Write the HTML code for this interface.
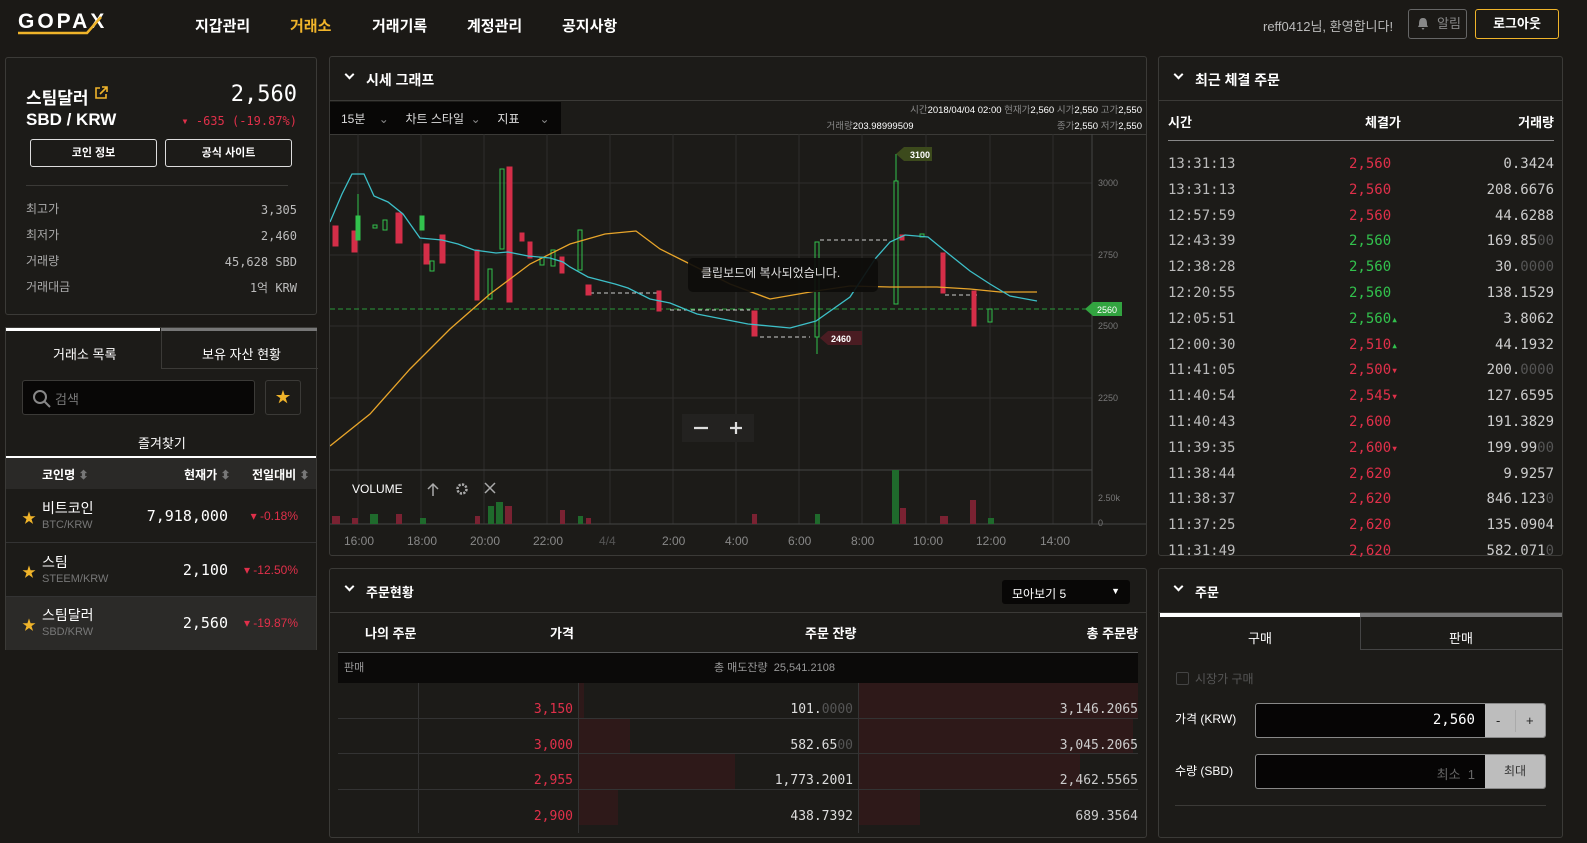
<!DOCTYPE html>
<html><head><meta charset="utf-8"><style>
*{box-sizing:border-box;margin:0;padding:0}
body{width:1587px;height:824px;overflow:hidden;background:#1b1916;color:#e8e8e8;font-family:"Liberation Sans","Noto Sans CJK KR",sans-serif;font-size:13px;position:relative}
.a{position:absolute}
.p{position:absolute;background:#1c1b18;border:1px solid #3b3a37;border-radius:3px}
.m{font-family:"DejaVu Sans Mono","Liberation Mono",monospace}
.r{color:#e0304a}.g{color:#32c24d}.dim{color:#555}
.btn{position:absolute;border:1px solid #ddd;border-radius:3px;font-size:11px;font-weight:bold;text-align:center;line-height:26px;color:#fff}
.nav{position:absolute;top:15px;font-size:15px;font-weight:bold;color:#fff}
.ph{position:absolute;left:0;right:0;top:0;height:44px;border-bottom:1px solid #3b3a37}
.ph b{position:absolute;left:36px;top:13px;font-size:14px;color:#fff}
.ph i{position:absolute;left:16px;top:14px;width:7px;height:7px;border-right:2px solid #fff;border-bottom:2px solid #fff;transform:rotate(45deg)}
.cr{position:absolute;left:0;right:0;height:53px}
.cr .st{position:absolute;left:16px;top:18px;color:#f0b42a;font-size:14px}
.cr .nm{position:absolute;left:36px;top:8px;color:#fff;font-size:14px}
.cr .sb{position:absolute;left:36px;top:29px;color:#777;font-size:11px}
.cr .pr{position:absolute;right:88px;top:17px;color:#fff;font-size:15px}
.cr .ch{position:absolute;right:18px;top:19px;font-size:12px}
</style></head><body>

<!-- header -->
<div class="a" style="left:18px;top:10px;font-size:21px;font-weight:bold;letter-spacing:3px;color:#fff">GOPAX</div>
<svg class="a" style="left:17px;top:14px" width="88" height="22"><path d="M1 19 H70 L84 3" stroke="#f0b42a" stroke-width="2.5" fill="none"/></svg>
<div class="nav" style="left:195px">지갑관리</div>
<div class="nav" style="left:290px;color:#f0b42a">거래소</div>
<div class="nav" style="left:372px">거래기록</div>
<div class="nav" style="left:467px">계정관리</div>
<div class="nav" style="left:562px">공지사항</div>
<div class="a" style="left:1263px;top:16px;font-size:13px;color:#bbb">reff0412님, 환영합니다!</div>
<div class="a" style="left:1408px;top:9px;width:59px;height:30px;border:1px solid #666;border-radius:3px;color:#888;font-size:13px;line-height:28px;padding-left:28px">알림</div>
<svg class="a" style="left:1417px;top:17px" width="12" height="13"><path d="M6 1 C2 1 2 5 2 8 L1 10 H11 L10 8 C10 5 10 1 6 1Z M4.5 11 H7.5 L6 13Z" fill="#888"/></svg>
<div class="a" style="left:1475px;top:9px;width:84px;height:30px;border:1px solid #f0b42a;border-radius:3px;color:#fff;font-size:13px;font-weight:bold;line-height:28px;text-align:center">로그아웃</div>

<!-- left info -->
<div class="p" style="left:5px;top:57px;width:312px;height:258px">
 <div class="a" style="left:20px;top:26px;font-size:17px;font-weight:bold;color:#fff">스팀달러</div>
 <svg class="a" style="left:88px;top:28px" width="14" height="14"><path d="M6 2H2V12H12V8M8 1H13V6M13 1L6 8" stroke="#f0b42a" stroke-width="1.6" fill="none"/></svg>
 <div class="a" style="left:20px;top:52px;font-size:17px;font-weight:bold;color:#fff">SBD / KRW</div>
 <div class="a m" style="right:19px;top:24px;font-size:22px;color:#fff">2,560</div>
 <div class="a m r" style="right:19px;top:56px;font-size:12px">▾ -635 (-19.87%)</div>
 <div class="btn" style="left:24px;top:81px;width:127px;height:28px">코인 정보</div>
 <div class="btn" style="left:159px;top:81px;width:127px;height:28px">공식 사이트</div>
 <div class="a" style="left:20px;right:28px;top:127px;border-top:1px solid #3b3a37"></div>
 <div class="a" style="left:20px;top:138px;color:#aaa;font-size:12px;line-height:26px">최고가<br>최저가<br>거래량<br>거래대금</div>
 <div class="a m" style="right:19px;top:139px;color:#bbb;font-size:12px;line-height:26px;text-align:right">3,305<br>2,460<br>45,628 SBD<br>1억 KRW</div>
</div>

<!-- left list -->
<div class="p" style="left:5px;top:327px;width:312px;height:323px;border-radius:0">
 <div class="a" style="left:0;top:0;width:154px;height:3px;background:#fff"></div>
 <div class="a" style="left:155px;top:0;width:156px;height:3px;background:#777"></div>
 <div class="a" style="left:155px;top:3px;width:157px;height:38px;border-left:1px solid #3b3a37;border-bottom:1px solid #3b3a37"></div>
 <div class="a" style="left:47px;top:16px;font-size:13px;color:#fff">거래소 목록</div>
 <div class="a" style="left:196px;top:16px;font-size:13px;color:#fff">보유 자산 현황</div>
 <div class="a" style="left:16px;top:52px;width:233px;height:35px;background:#080706;border:1px solid #3b3a37;border-radius:3px"></div>
 <svg class="a" style="left:26px;top:61px" width="20" height="20"><circle cx="8" cy="8" r="6" stroke="#888" stroke-width="2" fill="none"/><path d="M12.5 12.5L18 18" stroke="#888" stroke-width="2"/></svg>
 <div class="a" style="left:49px;top:61px;color:#777;font-size:13px">검색</div>
 <div class="a" style="left:259px;top:52px;width:36px;height:35px;border:1px solid #3b3a37;border-radius:3px;color:#f0b42a;text-align:center;line-height:33px;font-size:15px">★</div>
 <div class="a" style="left:132px;top:105px;color:#fff;font-size:13px">즐겨찾기</div>
 <div class="a" style="left:0;right:0;top:128px;height:2px;background:#fff"></div>
 <div class="a" style="left:0;right:0;top:130px;height:31px;background:#2a2927"></div>
 <div class="a" style="left:36px;top:138px;font-size:12px;font-weight:bold;color:#fff">코인명 <span style="color:#777">⬍</span></div>
 <div class="a" style="left:178px;top:138px;font-size:12px;font-weight:bold;color:#fff">현재가 <span style="color:#777">⬍</span></div>
 <div class="a" style="left:246px;top:138px;font-size:12px;font-weight:bold;color:#fff">전일대비 <span style="color:#777">⬍</span></div>
 <div class="cr" style="top:162px;border-bottom:1px solid #333"><span class="st">★</span><span class="nm">비트코인</span><span class="sb">BTC/KRW</span><span class="pr m">7,918,000</span><span class="ch r">▾ -0.18%</span></div>
 <div class="cr" style="top:216px;border-bottom:1px solid #333"><span class="st">★</span><span class="nm">스팀</span><span class="sb">STEEM/KRW</span><span class="pr m">2,100</span><span class="ch r">▾ -12.50%</span></div>
 <div class="cr" style="top:269px;background:#2b2a28"><span class="st">★</span><span class="nm">스팀달러</span><span class="sb">SBD/KRW</span><span class="pr m">2,560</span><span class="ch r">▾ -19.87%</span></div>
</div>

<!-- chart panel -->
<div class="p" style="left:329px;top:56px;width:818px;height:500px">
 <div class="ph"><i></i><b>시세 그래프</b></div>
 <div class="a" style="left:0;top:45px;width:231px;height:32px;background:#080706"></div>
 <div class="a" style="left:11px;top:53px;font-size:12px;color:#ddd">15분 &nbsp;&nbsp;&nbsp;<span style="color:#888">⌄</span> &nbsp;&nbsp;&nbsp;&nbsp;차트 스타일 &nbsp;<span style="color:#888">⌄</span> &nbsp;&nbsp;&nbsp;&nbsp;지표 &nbsp;&nbsp;&nbsp;&nbsp;&nbsp;<span style="color:#888">⌄</span></div>
 <div class="a" style="right:4px;top:46px;font-size:9.5px;color:#888;text-align:right;line-height:16px">시간<span style="color:#fff">2018/04/04 02:00</span> 현재가<span style="color:#fff">2,560</span> 시가<span style="color:#fff">2,550</span> 고가<span style="color:#fff">2,550</span><br>거래량<span style="color:#fff">203.98999509</span> <span style="display:inline-block;width:138px"></span> 종가<span style="color:#fff">2,550</span> 저가<span style="color:#fff">2,550</span></div>
 <div class="a" style="left:0;right:0;top:77px;border-top:1px solid #3b3a37"></div>
</div>
<svg class="a" style="left:330px;top:134px" width="816" height="421">
 <g stroke="#2e2d2b" stroke-width="1">
  <path d="M28 0V390M91 0V390M154 0V390M217 0V390M280 0V390M343 0V390M406 0V390M469 0V390M532 0V390M596 0V390M660 0V390M723 0V390"/>
  <path d="M0 49H762M0 121H762M0 192H762M0 264H762"/>
 </g>
 <path d="M762 0V390" stroke="#444"/>
 <path d="M0 336H762M0 390H816" stroke="#444"/>
 <g fill="#777" font-size="9" font-family="Liberation Sans"><text x="768" y="52">3000</text><text x="768" y="124">2750</text><text x="768" y="195">2500</text><text x="768" y="267">2250</text><text x="768" y="367">2.50k</text><text x="768" y="392">0</text></g>
 <g fill="#888" font-size="12" font-family="Liberation Sans"><text x="14" y="411">16:00</text><text x="77" y="411">18:00</text><text x="140" y="411">20:00</text><text x="203" y="411">22:00</text><text x="269" y="411" fill="#555">4/4</text><text x="332" y="411">2:00</text><text x="395" y="411">4:00</text><text x="458" y="411">6:00</text><text x="521" y="411">8:00</text><text x="583" y="411">10:00</text><text x="646" y="411">12:00</text><text x="710" y="411">14:00</text></g>
 <path d="M0 175H762" stroke="#2a9a3a" stroke-dasharray="5,3"/>
 <g stroke="#ccc" stroke-dasharray="4,3" fill="none"><path d="M260 159H330M340 176H420M430 203H480M490 106H560M615 161H650"/></g>
 <g fill="#d42e48" stroke="#d42e48">
  <rect x="3" y="92" width="5" height="20"/><rect x="22" y="97" width="5" height="21"/><rect x="66" y="79" width="6" height="30"/><rect x="94" y="110" width="5" height="20"/><rect x="110" y="101" width="5" height="28"/>
  <rect x="145" y="116" width="4" height="50"/><rect x="177" y="33" width="5" height="135"/><rect x="190" y="99" width="4" height="8"/><rect x="198" y="108" width="4" height="16"/><rect x="230" y="123" width="4" height="16"/>
  <rect x="256" y="151" width="5" height="10"/><rect x="327" y="157" width="4" height="20"/><rect x="422" y="177" width="5" height="25"/><rect x="570" y="101" width="4" height="5"/><rect x="611" y="119" width="4" height="40"/><rect x="642" y="157" width="4" height="35"/>
 </g>
 <g fill="none" stroke="#32c24d">
  <rect x="26" y="82" width="4" height="24" fill="#32c24d"/><path d="M28 60V82"/><rect x="43" y="91" width="4" height="3"/><rect x="53" y="86" width="4" height="10"/><rect x="90" y="82" width="4" height="14" fill="#32c24d"/><rect x="100" y="127" width="4" height="10"/><rect x="158" y="135" width="4" height="30"/><rect x="170" y="35" width="4" height="80"/>
  <rect x="210" y="123" width="4" height="8"/><rect x="221" y="116" width="4" height="16"/><rect x="248" y="96" width="4" height="40"/><rect x="485" y="108" width="4" height="95"/><path d="M487 203V220"/><rect x="564" y="47" width="4" height="123"/><path d="M566 20V47"/><rect x="590" y="100" width="4" height="3"/><rect x="658" y="175" width="4" height="13"/>
 </g>
 <polyline fill="none" stroke="#e8a52a" stroke-width="1.3" points="0,312 40,280 80,235 120,195 160,160 200,130 240,110 275,100 306,97 330,115 360,130 400,150 440,165 486,157 520,152 560,153 607,153 640,155 670,158 707,158"/>
 <polyline fill="none" stroke="#3dbfc8" stroke-width="1.3" points="0,88 12,60 22,40 34,40 44,62 58,68 73,80 90,104 112,106 128,110 144,116 166,119 178,118 198,122 220,124 233,128 240,133 258,143 285,150 298,154 320,165 340,169 367,180 418,190 460,194 486,187 520,163 545,125 560,108 575,101 598,103 620,121 640,137 660,150 680,162 707,167"/>
 <path d="M566 20L574 13H602V27H574Z" fill="#3c4a1c"/><text x="580" y="24" fill="#fff" font-size="9" font-weight="bold" font-family="Liberation Sans">3100</text>
 <path d="M490 204L498 197H532V211H498Z" fill="#4a1c22"/><text x="501" y="208" fill="#fff" font-size="9" font-weight="bold" font-family="Liberation Sans">2460</text>
 <path d="M755 175L763 168H792V182H763Z" fill="#32a440"/><text x="767" y="179" fill="#fff" font-size="9" font-family="Liberation Sans">2560</text>
 <rect x="358" y="124" width="190" height="34" rx="5" fill="#0d0c0b" opacity=".92"/>
 <text x="371" y="143" fill="#ddd" font-size="12" font-family="Liberation Sans,Noto Sans CJK KR">클립보드에 복사되었습니다.</text>
 <rect x="352" y="280" width="72" height="28" fill="#232220"/>
 <path d="M364 294H378M400 294H412M406 288V300" stroke="#ddd" stroke-width="2.2"/>
 <text x="22" y="359" fill="#fff" font-size="12" font-family="Liberation Sans">VOLUME</text>
 <path d="M103 362V350M98 355L103 350L108 355M155 349L165 359M165 349L155 359" stroke="#aaa" stroke-width="1.5" fill="none"/>
 <circle cx="132" cy="355" r="4.5" stroke="#aaa" stroke-width="2.5" fill="none" stroke-dasharray="2.2,1.3"/>
 <g fill="#7a2232"><rect x="2" y="382" width="8" height="8"/><rect x="22" y="384" width="6" height="6"/><rect x="66" y="380" width="6" height="10"/><rect x="145" y="382" width="5" height="8"/><rect x="175" y="372" width="7" height="18"/><rect x="230" y="376" width="5" height="14"/><rect x="256" y="384" width="5" height="6"/><rect x="422" y="380" width="5" height="10"/><rect x="570" y="374" width="6" height="16"/><rect x="640" y="366" width="6" height="24"/><rect x="610" y="382" width="8" height="8"/></g>
 <g fill="#1f6a2c"><rect x="40" y="380" width="8" height="10"/><rect x="90" y="384" width="6" height="6"/><rect x="158" y="372" width="6" height="18"/><rect x="166" y="368" width="7" height="22"/><rect x="248" y="382" width="5" height="8"/><rect x="485" y="380" width="5" height="10"/><rect x="562" y="336" width="7" height="54"/><rect x="658" y="384" width="6" height="6"/></g>
</svg>

<!-- order book -->
<div class="p" style="left:329px;top:568px;width:818px;height:270px">
 <div class="ph"><i></i><b style="font-size:13px">주문현황</b></div>
 <div class="a" style="left:672px;top:11px;width:128px;height:24px;background:#080706;border-radius:3px;font-size:12px;color:#fff;padding:5px 10px">모아보기 5<span style="position:absolute;right:10px;font-size:9px;top:6px">▼</span></div>
 <div class="a" style="left:35px;top:54px;font-size:13px;font-weight:bold;color:#fff">나의 주문</div>
 <div class="a" style="left:220px;top:54px;font-size:13px;font-weight:bold;color:#fff">가격</div>
 <div class="a" style="left:475px;top:54px;font-size:13px;font-weight:bold;color:#fff">주문 잔량</div>
 <div class="a" style="right:8px;top:54px;font-size:13px;font-weight:bold;color:#fff">총 주문량</div>
 <div class="a" style="left:8px;right:8px;top:83px;height:31px;background:#0b0a09;border-top:1px solid #555"></div>
 <div class="a" style="left:14px;top:90px;font-size:11px;color:#999">판매</div>
 <div class="a" style="left:384px;top:90px;font-size:11px;color:#999">총 매도잔량 &nbsp;25,541.2108</div>
 <div class="a" style="left:8px;right:8px;top:114px;height:160px">
  <div class="a" style="left:240px;top:0;width:6px;height:35px;background:#2e1919"></div>
  <div class="a" style="left:240px;top:36px;width:52px;height:35px;background:#2e1919"></div>
  <div class="a" style="left:240px;top:71px;width:157px;height:35px;background:#2e1919"></div>
  <div class="a" style="left:240px;top:107px;width:40px;height:35px;background:#2e1919"></div>
  <div class="a" style="left:520px;top:0;width:280px;height:35px;background:#2e1919"></div>
  <div class="a" style="left:520px;top:36px;width:275px;height:35px;background:#2e1919"></div>
  <div class="a" style="left:520px;top:71px;width:222px;height:35px;background:#2e1919"></div>
  <div class="a" style="left:520px;top:107px;width:62px;height:35px;background:#2e1919"></div>
  <div class="a" style="left:0;right:0;top:35px;border-top:1px solid #333"></div>
  <div class="a" style="left:0;right:0;top:70px;border-top:1px solid #333"></div>
  <div class="a" style="left:0;right:0;top:106px;border-top:1px solid #333"></div>
  <div class="a" style="left:80px;top:0;height:150px;border-left:1px solid #333"></div>
  <div class="a" style="left:240px;top:0;height:150px;border-left:1px solid #333"></div>
  <div class="a" style="left:520px;top:0;height:150px;border-left:1px solid #333"></div>
  <div class="a m r" style="left:80px;width:155px;top:9px;text-align:right;font-size:13px;line-height:35.5px">3,150<br>3,000<br>2,955<br>2,900</div>
  <div class="a m" style="left:240px;width:275px;top:9px;text-align:right;font-size:13px;line-height:35.5px;color:#ddd">101.<span class="dim">0000</span><br>582.65<span class="dim">00</span><br>1,773.2001<br>438.7392</div>
  <div class="a m" style="left:520px;width:280px;top:9px;text-align:right;font-size:13px;line-height:35.5px;color:#ccc">3,146.2065<br>3,045.2065<br>2,462.5565<br>689.3564</div>
 </div>
</div>

<!-- recent trades -->
<div class="p" style="left:1158px;top:56px;width:405px;height:500px">
 <div class="ph"><i></i><b>최근 체결 주문</b></div>
 <div class="a" style="left:9px;top:55px;font-size:13px;font-weight:bold;color:#fff">시간</div>
 <div class="a" style="left:206px;top:55px;font-size:13px;font-weight:bold;color:#fff">체결가</div>
 <div class="a" style="right:8px;top:55px;font-size:13px;font-weight:bold;color:#fff">거래량</div>
 <div class="a" style="left:9px;right:8px;top:83px;border-top:1px solid #888"></div>
 <div class="a m" style="left:9px;top:95px;font-size:14px;line-height:25.8px;color:#bbb">13:31:13<br>13:31:13<br>12:57:59<br>12:43:39<br>12:38:28<br>12:20:55<br>12:05:51<br>12:00:30<br>11:41:05<br>11:40:54<br>11:40:43<br>11:39:35<br>11:38:44<br>11:38:37<br>11:37:25<br>11:31:49</div>
 <div class="a m" style="left:190px;top:95px;font-size:14px;line-height:25.8px"><span class="r">2,560</span><br><span class="r">2,560</span><br><span class="r">2,560</span><br><span class="g">2,560</span><br><span class="g">2,560</span><br><span class="g">2,560</span><br><span class="g">2,560<small>▴</small></span><br><span class="r">2,510<small class="g">▴</small></span><br><span class="r">2,500<small>▾</small></span><br><span class="r">2,545<small>▾</small></span><br><span class="r">2,600</span><br><span class="r">2,600<small>▾</small></span><br><span class="r">2,620</span><br><span class="r">2,620</span><br><span class="r">2,620</span><br><span class="r">2,620</span></div>
 <div class="a m" style="right:8px;top:95px;font-size:14px;line-height:25.8px;color:#ccc;text-align:right">0.3424<br>208.6676<br>44.6288<br>169.85<span class="dim">00</span><br>30.<span class="dim">0000</span><br>138.1529<br>3.8062<br>44.1932<br>200.<span class="dim">0000</span><br>127.6595<br>191.3829<br>199.99<span class="dim">00</span><br>9.9257<br>846.123<span class="dim">0</span><br>135.0904<br>582.071<span class="dim">0</span></div>
</div>

<!-- order form -->
<div class="p" style="left:1158px;top:568px;width:405px;height:270px">
 <div class="ph"><i></i><b style="font-size:13px">주문</b></div>
 <div class="a" style="left:1px;top:44px;width:200px;height:4px;background:#fff"></div>
 <div class="a" style="left:201px;top:44px;width:202px;height:4px;background:#777"></div>
 <div class="a" style="left:201px;top:48px;width:203px;height:33px;border-left:1px solid #444;border-bottom:1px solid #444"></div>
 <div class="a" style="left:89px;top:59px;font-size:13px;color:#fff">구매</div>
 <div class="a" style="left:290px;top:59px;font-size:13px;color:#fff">판매</div>
 <div class="a" style="left:17px;top:103px;width:13px;height:13px;border:1px solid #444;border-radius:2px"></div>
 <div class="a" style="left:36px;top:101px;font-size:12px;color:#555">시장가 구매</div>
 <div class="a" style="left:16px;top:141px;font-size:12px;color:#fff">가격 (KRW)</div>
 <div class="a" style="left:16px;top:193px;font-size:12px;color:#fff">수량 (SBD)</div>
 <div class="a" style="left:96px;top:134px;width:291px;height:35px;background:#060505;border:1px solid #888;border-radius:3px;overflow:hidden">
  <div class="a m" style="right:70px;top:8px;font-size:14px;color:#fff">2,560</div>
  <div class="a" style="right:0;top:0;width:60px;height:35px;background:#bdbdbd;color:#222;font-size:13px;line-height:33px"><span style="position:absolute;left:11px">-</span><span style="position:absolute;left:30px;top:6px;height:22px;border-left:1px solid #aaa"></span><span style="position:absolute;left:41px">+</span></div>
 </div>
 <div class="a" style="left:96px;top:185px;width:291px;height:35px;background:#060505;border:1px solid #888;border-radius:3px;overflow:hidden">
  <div class="a" style="right:70px;top:9px;font-size:13px;color:#666">최소 &nbsp;1</div>
  <div class="a" style="right:0;top:0;width:60px;height:35px;background:#bdbdbd;color:#333;font-size:12px;line-height:33px;text-align:center">최대</div>
 </div>
 <div class="a" style="left:16px;right:16px;top:236px;border-top:1px solid #3b3a37"></div>
</div>
</body></html>
